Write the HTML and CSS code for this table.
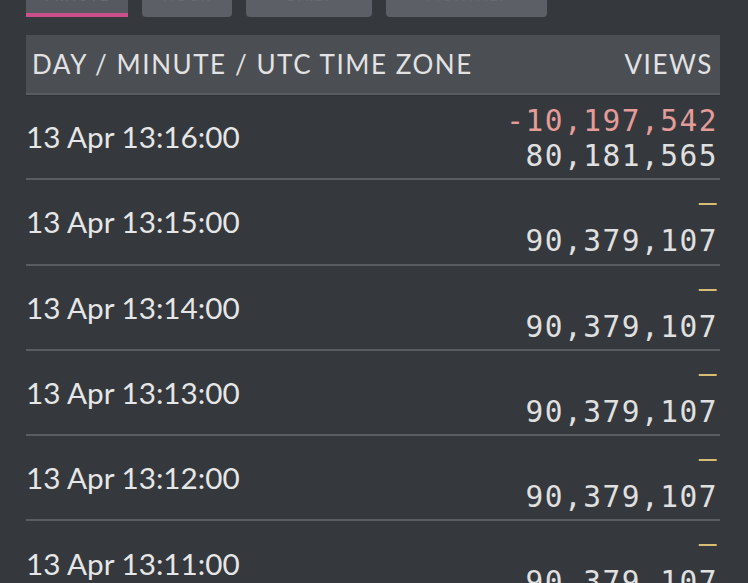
FILE: index.html
```html
<!DOCTYPE html>
<html>
<head>
<meta charset="utf-8">
<link rel="stylesheet" href="styles.css">
</head>
<body>
<div class="page">
  <nav class="tabs">
    <div class="tab active">MINUTE</div>
    <div class="tab">HOUR</div>
    <div class="tab">DAILY</div>
    <div class="tab">MONTHLY</div>
  </nav>
  <div class="table">
    <div class="thead">
      <span>Day / Minute / UTC Time Zone</span>
      <span>Views</span>
    </div>
    <div class="row">
      <div class="date">13 Apr 13:16:00</div>
      <div class="views"><div class="delta neg">-10,197,542</div><div>80,181,565</div></div>
    </div>
    <div class="row">
      <div class="date">13 Apr 13:15:00</div>
      <div class="views"><div class="delta zero"><span>–</span></div><div>90,379,107</div></div>
    </div>
    <div class="row">
      <div class="date">13 Apr 13:14:00</div>
      <div class="views"><div class="delta zero"><span>–</span></div><div>90,379,107</div></div>
    </div>
    <div class="row">
      <div class="date">13 Apr 13:13:00</div>
      <div class="views"><div class="delta zero"><span>–</span></div><div>90,379,107</div></div>
    </div>
    <div class="row">
      <div class="date">13 Apr 13:12:00</div>
      <div class="views"><div class="delta zero"><span>–</span></div><div>90,379,107</div></div>
    </div>
    <div class="row">
      <div class="date">13 Apr 13:11:00</div>
      <div class="views"><div class="delta zero"><span>–</span></div><div>90,379,107</div></div>
    </div>
  </div>
</div>
</body>
</html>
```

FILE: styles.css
```css
html, body {
  margin: 0;
  padding: 0;
  background: #35383d;
  overflow: hidden;
}
.page {
  padding: 0 28px 0 26px;
  font-family: Lato, "Open Sans", sans-serif;
  color: #e4e4e4;
}
.tabs {
  display: flex;
  gap: 14px;
  margin-top: -23px;
  height: 40px;
}
.tab {
  background: #5c5f66;
  border-radius: 0 0 4px 4px;
  color: #676a72;
  font-size: 15px;
  line-height: 15px;
  letter-spacing: 1px;
  display: flex;
  align-items: flex-end;
  justify-content: center;
  padding-bottom: 14px;
  box-sizing: border-box;
}
.tab:nth-child(1) { width: 102px; }
.tab:nth-child(2) { width: 90px; }
.tab:nth-child(3) { width: 126px; }
.tab:nth-child(4) { width: 161px; }
.tab.active {
  background: #56595f;
  border-bottom: 4px solid #c9508a;
  border-radius: 0;
  padding-bottom: 10px;
}
.table {
  margin-top: 18px;
}
.thead {
  display: flex;
  justify-content: space-between;
  align-items: center;
  height: 58px;
  background: #4b4e53;
  border-bottom: 2px solid #595c61;
  box-shadow: 0 1px 0 #2e3135;
  padding: 0 7px 0 6px;
  text-transform: uppercase;
  font-size: 26px;
  letter-spacing: 1.55px;
  color: #e2e2e4;
}
.row {
  display: flex;
  justify-content: space-between;
  align-items: center;
  min-height: 83.3px;
  border-bottom: 2px solid #595c61;
  box-sizing: content-box;
}
.date {
  font-size: 29.7px;
  color: #e6e6e6;
}
.views {
  align-self: flex-start;
  padding-top: 9px;
  text-align: right;
  font-family: "DejaVu Sans Mono", "Liberation Mono", monospace;
  font-size: 29.5px;
  line-height: 35px;
  letter-spacing: 1.5px;
  color: #e0e0e0;
  padding-right: 2px;
}
.neg { color: #e49c99; }
.zero { color: #d6bd72; }
.zero span { display: inline-block; transform: translateY(-4px); }
```
